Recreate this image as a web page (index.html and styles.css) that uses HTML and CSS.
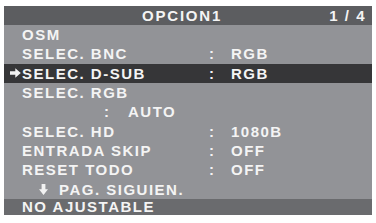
FILE: index.html
```html
<!DOCTYPE html>
<html lang="es">
<head>
  <meta charset="UTF-8" />
  <meta name="viewport" content="width=device-width, initial-scale=1.0"/>
  <title>OSD - Opcion1</title>
  <link rel="stylesheet" href="styles.css">
</head>
<body>
  <div class="osd">
    <div class="osd-title">
      <span class="title-text">OPCION1</span>
      <span class="page-num">1 / 4</span>
    </div>

    <div class="menu">
      <div class="row">
        <span class="mark"></span>
        <span class="label">OSM</span>
      </div>
      <div class="row">
        <span class="mark"></span>
        <span class="label">SELEC. BNC</span>
        <span class="colon">:</span>
        <span class="value">RGB</span>
      </div>
      <div class="row selected">
        <span class="mark">
          <svg width="11" height="10" viewBox="0 0 11 10">
            <polygon points="0,3.3 5.3,3.3 5.3,0.2 10.8,5 5.3,9.8 5.3,6.7 0,6.7" fill="#f2f2f2"/>
          </svg>
        </span>
        <span class="label">SELEC. D-SUB</span>
        <span class="colon">:</span>
        <span class="value">RGB</span>
      </div>
      <div class="row">
        <span class="mark"></span>
        <span class="label">SELEC. RGB</span>
      </div>
      <div class="row sub">
        <span class="colon">:</span>
        <span class="value">AUTO</span>
      </div>
      <div class="row">
        <span class="mark"></span>
        <span class="label">SELEC. HD</span>
        <span class="colon">:</span>
        <span class="value">1080B</span>
      </div>
      <div class="row">
        <span class="mark"></span>
        <span class="label">ENTRADA SKIP</span>
        <span class="colon">:</span>
        <span class="value">OFF</span>
      </div>
      <div class="row">
        <span class="mark"></span>
        <span class="label">RESET TODO</span>
        <span class="colon">:</span>
        <span class="value">OFF</span>
      </div>
      <div class="row next">
        <svg width="9" height="11" viewBox="0 0 9 11">
          <polygon points="2.6,0 6.4,0 6.4,5.3 9,5.3 4.5,11 0,5.3 2.6,5.3" fill="#f2f2f2"/>
        </svg>
        <span class="label">PAG. SIGUIEN.</span>
      </div>
    </div>

    <div class="osd-status">NO AJUSTABLE</div>
  </div>
</body>
</html>
```

FILE: styles.css
```css
body {
  margin: 0;
  background-color: #fff;
  font-family: "Liberation Sans", Arial, sans-serif;
  font-weight: bold;
  font-size: 15px;
  letter-spacing: 1.5px;
  color: #f4f4f4;
}

/* OSD panel */
.osd {
  width: 368px;
  margin: 6px 0 0 4px;
  background-color: #929397;
}

.osd-title {
  height: 19px;
  background-color: #5c5d60;
  display: flex;
  align-items: center;
  justify-content: space-between;
  padding: 0 6px 0 138px;
  line-height: 19px;
}

.title-text {
  letter-spacing: 1.8px;
}

/* Menu rows */
.menu {
  display: grid;
  grid-auto-rows: 19.33px;
}

.row {
  display: grid;
  grid-template-columns: 12px 187px 22px 1fr;
  align-items: center;
  padding-left: 6px;
  line-height: 19px;
}

.row.selected {
  background-color: #363638;
}

.mark {
  display: flex;
  align-items: center;
}

.row.sub {
  grid-template-columns: 24px 1fr;
  padding-left: 100px;
}

.row.next {
  display: flex;
  align-items: center;
  gap: 11px;
  padding-left: 35px;
}

/* Status bar */
.osd-status {
  height: 16px;
  line-height: 16px;
  background-color: #6a6b6e;
  padding-left: 18px;
}
```
